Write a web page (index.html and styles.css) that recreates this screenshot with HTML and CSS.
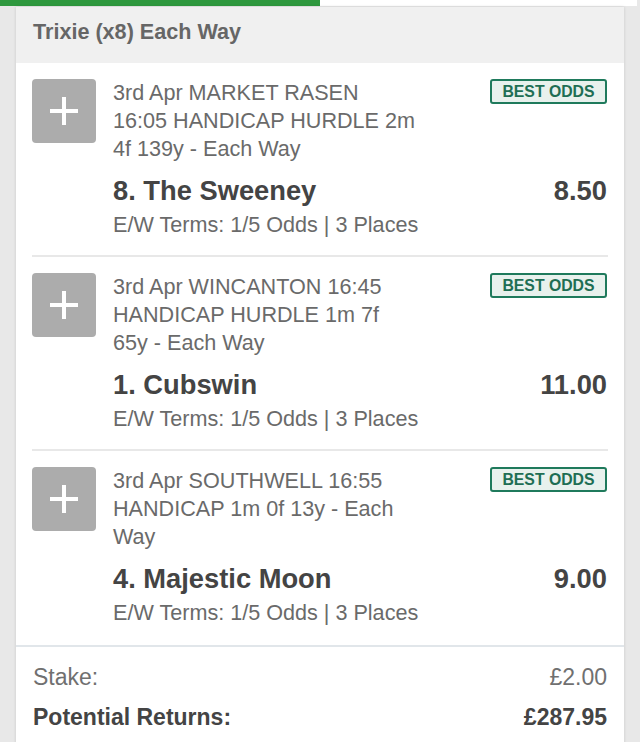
FILE: index.html
```html
<!DOCTYPE html>
<html>
<head>
<meta charset="utf-8">
<link rel="stylesheet" href="styles.css">
</head>
<body>
<div class="tabs"><div class="tab-active"></div></div>
<div class="card">
  <div class="card-header">Trixie (x8) Each Way</div>

  <div class="sel">
    <div class="plus"><span class="ph"></span><span class="pv"></span></div>
    <div class="sel-body">
      <div class="sel-top">
        <div class="desc">3rd Apr MARKET RASEN 16:05 HANDICAP HURDLE 2m 4f 139y - Each Way</div>
        <div class="badge">BEST ODDS</div>
      </div>
      <div class="runner"><span>8. The Sweeney</span><span>8.50</span></div>
      <div class="terms">E/W Terms: 1/5 Odds | 3 Places</div>
    </div>
  </div>

  <div class="sel">
    <div class="plus"><span class="ph"></span><span class="pv"></span></div>
    <div class="sel-body">
      <div class="sel-top">
        <div class="desc">3rd Apr WINCANTON 16:45 HANDICAP HURDLE 1m 7f 65y - Each Way</div>
        <div class="badge">BEST ODDS</div>
      </div>
      <div class="runner"><span>1. Cubswin</span><span>11.00</span></div>
      <div class="terms">E/W Terms: 1/5 Odds | 3 Places</div>
    </div>
  </div>

  <div class="sel last">
    <div class="plus"><span class="ph"></span><span class="pv"></span></div>
    <div class="sel-body">
      <div class="sel-top">
        <div class="desc">3rd Apr SOUTHWELL 16:55 HANDICAP 1m 0f 13y - Each Way</div>
        <div class="badge">BEST ODDS</div>
      </div>
      <div class="runner"><span>4. Majestic Moon</span><span>9.00</span></div>
      <div class="terms">E/W Terms: 1/5 Odds | 3 Places</div>
    </div>
  </div>

  <div class="footer">
    <div class="frow stake"><span>Stake:</span><span>£2.00</span></div>
    <div class="frow returns"><span>Potential Returns:</span><span>£287.95</span></div>
  </div>
</div>
</body>
</html>
```

FILE: styles.css
```css
html, body {
  margin: 0;
  padding: 0;
  background: #e8e8e8;
  font-family: "Liberation Sans", Arial, Helvetica, sans-serif;
  overflow: hidden;
}
.tabs {
  height: 6px;
  background: #ffffff;
  margin-right: 3px;
}
.tab-active {
  width: 320px;
  height: 6px;
  background: #2e983e;
}
.card {
  margin: 1px 16px 0 16px;
  background: #ffffff;
  box-shadow: 0 0 3px rgba(0, 0, 0, 0.14);
}
.card-header {
  height: 56px;
  background: #f0f0f0;
  color: #666666;
  font-weight: bold;
  font-size: 21.6px;
  line-height: 50px;
  padding: 0 17px;
}
.sel {
  display: flex;
  margin: 0 16px;
  padding: 16px 0 16px 0;
  border-bottom: 2px solid #e8e8e8;
}
.sel.last {
  border-bottom: none;
  padding-bottom: 18px;
}
.plus {
  position: relative;
  flex: 0 0 64px;
  width: 64px;
  height: 64px;
  background: #acacac;
  border-radius: 4px;
}
.ph, .pv {
  position: absolute;
  background: #ffffff;
}
.ph {
  left: 18px;
  top: 30px;
  width: 28px;
  height: 4px;
}
.pv {
  left: 30px;
  top: 18px;
  width: 4px;
  height: 28px;
}
.sel-body {
  flex: 1;
  margin-left: 17px;
  margin-right: 1px;
}
.sel-top {
  display: flex;
  justify-content: space-between;
  align-items: flex-start;
}
.desc {
  width: 305px;
  font-size: 21.6px;
  line-height: 28px;
  color: #6a6a6a;
}
.badge {
  box-sizing: border-box;
  width: 117px;
  height: 25px;
  border: 2px solid #1f7a5c;
  border-radius: 3px;
  background: #e8f1ed;
  color: #1e6e54;
  font-weight: bold;
  font-size: 15.8px;
  line-height: 21px;
  text-align: center;
}
.runner {
  display: flex;
  justify-content: space-between;
  margin-top: 11px;
  font-size: 27.3px;
  line-height: 33px;
  font-weight: bold;
  color: #444444;
}
.terms {
  margin-top: 4px;
  font-size: 21.6px;
  line-height: 28px;
  color: #6a6a6a;
}
.footer {
  border-top: 2px solid #e1e6ea;
  padding: 10px 17px 10px 17px;
}
.frow {
  display: flex;
  justify-content: space-between;
  font-size: 23px;
  line-height: 40px;
}
.stake {
  color: #707070;
}
.returns {
  color: #444444;
  font-weight: bold;
}
```
